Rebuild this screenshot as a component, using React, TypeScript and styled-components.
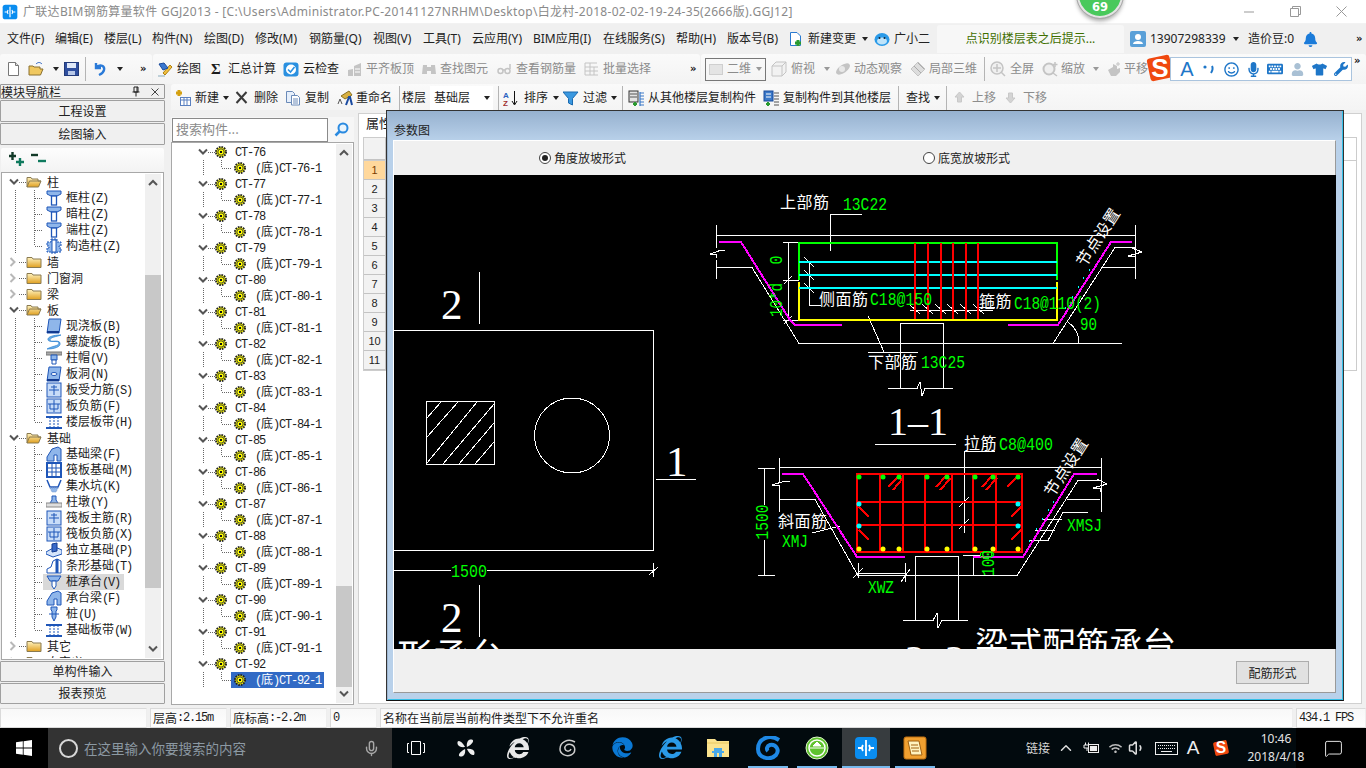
import React from 'react';
import styled, { createGlobalStyle } from 'styled-components';
import { FaBell, FaEdge, FaInternetExplorer, FaKeyboard, FaMicrophone, FaRegSmile, FaTshirt, FaUser, FaWifi, FaWrench } from 'react-icons/fa';
import { ChevronUp, MessageSquare, Mic, Volume1 } from 'lucide-react';

const CJK = '"Noto Sans CJK SC", sans-serif';
const UI = '"Noto Sans", "Noto Sans CJK SC", sans-serif';

const Global = createGlobalStyle`
  html, body { margin: 0; padding: 0; background: #f0f0f0; overflow: hidden; }
  * { box-sizing: border-box; }
`;

const Root = styled.div`
  position: relative; width: 1366px; height: 768px; overflow: hidden;
  display: flex; flex-direction: column; background: #f0f0f0;
  font: 12px/16px ${UI}; color: #1c1c1c;
`;

/* ---------- title bar ---------- */
const TitleBar = styled.div`
  flex: none; height: 23px; background: #fff; display: flex; align-items: center; padding: 0 2px;
`;
const TitleText = styled.span`
  flex: 1; min-width: 0; margin-left: 5px; color: #8a8a8a; font-size: 12px; letter-spacing: .31px; white-space: nowrap;
`;
const WinBtn = styled.span`
  flex: none; width: 46px; display: flex; justify-content: center; align-items: center; color: #999;
`;
const Badge = styled.div`
  position: absolute; left: 1077px; top: -28px; width: 46px; height: 46px; border-radius: 50%;
  background: #49c95c; border: 2px solid #e4e4e4; outline: 1px solid #aaa;
  box-shadow: 0 3px 4px rgba(0,0,0,.35); color: #fff; font-weight: 700; font-size: 11.5px;
  display: flex; align-items: flex-end; justify-content: center; padding-bottom: 1px;
  font-family: "DejaVu Sans", sans-serif;
`;

/* ---------- menu ---------- */
const MenuBar = styled.div`
  flex: none; height: 31px; display: flex; align-items: center; padding-left: 7px; background: #f0f0f0; border-top: 1px solid #f2f2f2;
`;
const MenuItem = styled.span<{ $w: number }>`
  flex: none; width: ${p => p.$w}px; display: flex; align-items: center; gap: 4px; white-space: nowrap; color: #222;
`;
const HintTab = styled.div`
  flex: none; width: 187px; height: 28px; margin-right: 6px; background: #f7f7f7; border-radius: 3px 3px 0 0;
  display: flex; align-items: center; justify-content: center; color: #3f6f00;
`;
const More = styled.span`
  flex: none; font: 700 10px/10px "DejaVu Sans", sans-serif; color: #111; letter-spacing: -1px;
`;
const Caret = styled.span<{ $ml?: number; $muted?: boolean }>`
  flex: none; width: 0; height: 0; margin-left: ${p => p.$ml ?? 4}px;
  border-left: 3.5px solid transparent; border-right: 3.5px solid transparent;
  border-top: 4px solid ${p => (p.$muted ? '#999' : '#222')};
`;

/* ---------- toolbars ---------- */
const ToolRow = styled.div`
  flex: none; height: 30px; display: flex; gap: 1px; background: #f0f0f0;
`;
const Group = styled.div<{ $w?: number; $pl?: number }>`
  flex: ${p => (p.$w ? 'none' : '1')}; width: ${p => (p.$w ? `${p.$w}px` : 'auto')};
  padding-left: ${p => p.$pl ?? 4}px; display: flex; align-items: center; border-radius: 3px 3px 0 0;
  background: linear-gradient(#fafafa, #f3f3f3);
  white-space: nowrap; overflow: hidden;
`;
const Tool = styled.span<{ $w?: number; $g?: number; $muted?: boolean }>`
  flex: none; width: ${p => (p.$w ? `${p.$w}px` : 'auto')}; display: flex; align-items: center; gap: ${p => p.$g ?? 4}px;
  color: ${p => (p.$muted ? '#8c8c8c' : '#1c1c1c')}; white-space: nowrap;
`;
const Sigma = styled.b`
  width: 9px; font-family: "Liberation Serif", serif; font-size: 15px;
`;
const Sep = styled.span<{ $w: number; $h?: number }>`
  flex: none; width: ${p => p.$w}px; height: ${p => p.$h ?? 24}px; display: flex;
  &::before { content: ''; display: block; width: 1px; height: 100%; background: #b4b4b4; }
`;
const ViewCombo = styled.span`
  flex: none; width: 61px; height: 23px; border: 1px solid #777; margin-right: 5px;
  display: flex; align-items: center; padding-left: 3px; gap: 4px; color: #8c8c8c;
`;
const Swatch = styled.span`
  flex: none; width: 14px; height: 11px; background: #e4e4e4; border: 1px solid #cfcfcf;
`;

/* ---------- workspace ---------- */
const Workspace = styled.div`
  flex: none; height: 624px; display: flex;
`;
const Nav = styled.div`
  flex: none; width: 165px; display: flex; flex-direction: column;
`;
const NavHead = styled.div`
  flex: none; height: 15px; border: 1px solid #999; border-radius: 1px; display: flex; align-items: center;
  font-size: 12px; line-height: 13px; font-family: ${CJK};
`;
const NavTitle = styled.span` flex: 1; `;
const PinIcon = styled.svg` flex: none; margin-right: 10px; `;
const CloseIcon = styled.svg` flex: none; margin-right: 5px; `;
const NavBtn = styled.div<{ $h?: number; $pt?: number }>`
  flex: none; height: ${p => p.$h ?? 22}px; margin-top: 1px; padding-top: ${p => p.$pt ?? 0}px; background: #f0f0f0; border: 1px solid #a0a0a0; border-radius: 1px;
  display: flex; align-items: center; justify-content: center; color: #222;
`;
const NavBody = styled.div`
  flex: none; height: 514px; margin-top: 1px; display: flex; flex-direction: column; background: #f0f0f0;
`;
const NavTools = styled.div`
  flex: none; height: 24px; display: flex; align-items: center; gap: 7px; padding: 0 0 3px 7px; background: linear-gradient(#fdfdfd, #f3f3f3);
  margin: 2px 1px 0; border-radius: 2px;
`;
const TreeFrame = styled.div`
  flex: 1; margin: 0 1px; min-height: 0; border: 1px solid #a8a8a8; background: #fff; display: flex; padding: 1px 2px 1px 1px;
`;
const TreeScroll = styled.div`
  flex: 1; min-width: 0; overflow: hidden;
`;
const Bar = styled.div`
  flex: none; width: 16px; background: #f0f0f0; display: flex; flex-direction: column; align-items: stretch;
`;
const BarBtn = styled.div`
  flex: none; height: 18px; display: flex; align-items: center; justify-content: center; color: #555;
`;
const BarTrack = styled.div` flex: 1; min-height: 0; `;
const BarThumb = styled.div<{ $top: number; $h: number }>`
  height: ${p => p.$h}px; margin-top: ${p => p.$top}px; background: #c8c8c8;
`;
const Row = styled.div`
  height: 16px; display: flex; align-items: center; white-space: nowrap; font-family: ${CJK}; font-size: 12px; color: #1c1c1c;
`;
const Twist = styled.span<{ $ml: number }>`
  flex: none; margin-left: ${p => p.$ml}px; width: 10px; height: 16px; display: flex; align-items: center;
`;
const Label = styled.span<{ $ml: number }>`
  margin-left: ${p => p.$ml}px; display: inline-block;
`;
const Lat = styled.span`
  font-family: "Liberation Mono", monospace; font-size: 12px; letter-spacing: -1.2px;
`;
const NavItem = styled.span<{ $on?: boolean }>`
  flex: none; width: 81px; height: 16px; padding-left: 3px; display: flex; align-items: center;
  background: ${p => (p.$on ? '#d9d9d9' : 'transparent')};
`;
const CompItem = styled.span<{ $on?: boolean }>`
  flex: none; width: 93px; height: 16px; padding-left: 3px; display: flex; align-items: center;
  background: ${p => (p.$on ? '#316ac5' : 'transparent')}; color: ${p => (p.$on ? '#fff' : 'inherit')};
`;
const Main = styled.div`
  flex: 1; min-width: 0; padding-left: 6px; display: flex; flex-direction: column;
`;
const Row2 = styled.div`
  flex: none; height: 26px; display: flex; align-items: center; padding: 2px 0 0 4px;
  background: linear-gradient(#fafafa, #f4f4f4); border-radius: 3px 0 0 0; white-space: nowrap;
`;
const FloorCombo = styled.span`
  flex: none; width: 63px; height: 24px; background: #fff; display: flex; align-items: center; padding-left: 4px; justify-content: space-between;
  padding-right: 3px; margin-right: 5px;
`;
const Body = styled.div`
  flex: 1; min-height: 0; display: flex;
`;
const CompCol = styled.div`
  flex: none; width: 183px; padding-top: 7px; padding-bottom: 3px; display: flex; flex-direction: column;
`;
const SearchRow = styled.div`
  flex: none; height: 25px; display: flex; align-items: center; padding-left: 1px; gap: 6px; background: #f6f6f6;
`;
const Search = styled.div`
  flex: none; width: 156px; height: 24px; background: #fff; border: 1px solid #8a8a8a; color: #8a8a8a; padding-left: 3px;
  font-size: 13px; line-height: 19px; font-family: ${CJK};
`;
const SearchIcon = styled.svg` flex: none; `;
const CompFrame = styled.div`
  flex: 1; min-height: 0; border: 1px solid #a8a8a8; background: #fff; display: flex; padding: 1px 1px 1px 0;
`;
const Props = styled.div`
  flex: 1; min-width: 0; margin: 3px 4px 4px 4px; background: #fff; border: 1px solid #d0d0d0; display: flex; flex-direction: column;
`;
const PropTab = styled.div`
  flex: none; height: 23px; padding-left: 7px; font-size: 13px; line-height: 17px; font-family: ${CJK};
`;
const PropTable = styled.div` margin: 0 4px; border: 1px solid #ccc; flex: none; `;
const PropHead = styled.div` height: 23px; border-bottom: 1px solid #ccc; display: flex; `;
const PropRow = styled.div` height: 19px; display: flex; `;
const RowNo = styled.div<{ $on?: boolean }>`
  flex: none; width: 22px; display: flex; align-items: center; justify-content: center;
  font-family: "Liberation Sans", sans-serif; font-size: 11px;
  background: ${p => (p.$on ? '#ffd89c' : '#f2f2f2')}; color: ${p => (p.$on ? '#7a3c00' : '#222')};
  border-right: 1px solid #c4c4c4; border-bottom: 1px solid #c4c4c4;
`;

/* ---------- status ---------- */
const Status = styled.div`
  flex: none; height: 20px; display: flex; gap: 3px; background: #f0f0f0;
`;
const Cell = styled.div<{ $w: number }>`
  flex: none; width: ${p => p.$w}px; background: linear-gradient(#f8f8f8, #fefefe); border: 1px solid #dadada; border-right-color: #eee;
  padding-left: 2px; display: flex; align-items: center; font-family: ${CJK}; white-space: nowrap; line-height: 16px;
`;

/* ---------- taskbar ---------- */
const Task = styled.div`
  flex: none; height: 40px; display: flex; align-items: stretch; color: #fff;
  background: linear-gradient(90deg, #020a0e 0 1296px, #000 1296px);
`;
const Start = styled.div`
  flex: none; width: 48px; background: #000; display: flex; align-items: center; justify-content: center;
`;
const Cortana = styled.div`
  flex: none; width: 344px; background: #333; display: flex; align-items: center; padding-left: 11px; color: #8c99a3; font-size: 13.5px; font-family: ${CJK};
`;
const Ring = styled.span`
  flex: none; width: 19px; height: 19px; border-radius: 50%; border: 2.5px solid #d8d8d8; margin-right: 6px;
`;
const Hint = styled.span` flex: 1; white-space: nowrap; `;
const MicWrap = styled.span` flex: none; margin-right: 12px; display: flex; `;
const Slot = styled.div<{ $w: number; $ml?: number; $on?: boolean; $active?: boolean }>`
  flex: none; width: ${p => p.$w}px; margin-left: ${p => p.$ml ?? 0}px; display: flex; align-items: center; justify-content: center;
  border-bottom: 2px solid ${p => (p.$on ? '#76b9ed' : 'transparent')}; padding-top: 1px;
  background: ${p => (p.$active ? '#373c3f' : 'transparent')};
`;
const TrayItem = styled.div<{ $w: number; $ml?: number; $pr?: number }>`
  flex: none; width: ${p => p.$w}px; margin-left: ${p => p.$ml ?? 0}px; padding-right: ${p => p.$pr ?? 0}px; display: flex; align-items: center; justify-content: center;
  color: #d8d8d8; font-family: ${CJK}; font-size: 12px;
`;
const TrayA = styled.span` font: 400 19px "Liberation Sans", sans-serif; color: #eee; `;
const Clock = styled.div`
  flex: none; width: 60px; display: flex; flex-direction: column; align-items: center; justify-content: center; line-height: 18px;
  font-size: 12px; color: #e4e4e4; white-space: nowrap; font-family: "Noto Sans", sans-serif;
`;

/* ---------- dialog ---------- */
const Dialog = styled.div`
  position: absolute; left: 386px; top: 110px; width: 958px; height: 591px;
  border: 1px solid #333; border-bottom-color: #111; box-shadow: inset -1px 0 0 #35c0e8, inset 1px 0 0 #9db6d1, inset 0 -1px 0 #35c0e8;
  background: linear-gradient(#96b1cf 0, #b9d1ea 30px);
  padding: 29px 7px 7px 6px; display: flex; flex-direction: column;
`;
const DlgTitle = styled.div`
  position: absolute; left: 7px; top: 11px; font-size: 12px; line-height: 16px; color: #222; font-family: ${CJK};
`;
const DlgBody = styled.div`
  flex: 1; min-height: 0; background: #f0f0f0; border-top: 1px solid #fff; border-left: 1px solid #fff; border-right: 1px solid #999; border-bottom: 1px solid #999;
  display: flex; flex-direction: column;
`;
const RadioBand = styled.div`
  flex: none; height: 34px; display: flex; align-items: center; padding-left: 145px;
`;
const RadioItem = styled.label<{ $w: number }>`
  flex: none; width: ${p => p.$w}px; display: flex; align-items: center; gap: 3px; font-family: ${CJK}; color: #222;
`;
const Radio = styled.span<{ $on?: boolean }>`
  flex: none; width: 12px; height: 12px; border-radius: 50%; border: 1px solid #444; background: #fff;
  display: flex; align-items: center; justify-content: center;
  &::after { content: ''; width: 6px; height: 6px; border-radius: 50%; background: ${p => (p.$on ? '#222' : 'transparent')}; }
`;
const Canvas = styled.svg`
  flex: none; display: block; width: 942px; height: 474px; background: #000;
`;
const DlgFoot = styled.div`
  flex: 1; min-height: 0; display: flex; justify-content: flex-end; padding: 12px 26px 0 0;
`;
const DlgBtn = styled.div`
  width: 73px; height: 23px; background: #e1e1e1; border: 1px solid #adadad; display: flex; align-items: center; justify-content: center;
  font-family: ${CJK}; color: #222;
`;
const White = styled.text<{ $s?: number }>`
  fill: #fff; font-family: ${CJK}; font-size: ${p => p.$s ?? 16}px; letter-spacing: ${p => (p.$s ? 0 : .5)}px;
`;
const GreenText = styled.text<{ $s?: number }>`
  fill: #0f0; font-family: "Liberation Mono", monospace; font-size: ${p => p.$s ?? 18}px;
`;
const Big = styled.text<{ $s: number }>`
  fill: #fff; font-family: "Liberation Serif", serif; font-size: ${p => p.$s}px;
`;

/* ---------- Sogou IME bar ---------- */
const Ime = styled.div`
  position: absolute; left: 1170px; top: 57px; width: 182px; height: 24px; background: #fff; border: 1px solid #aac4de;
  display: flex; align-items: center; padding-left: 5px; color: #1e76c8;
`;
const ImeSlot = styled.span`
  flex: none; width: 22px; display: flex; align-items: center; justify-content: center; font: 400 20px/20px "Liberation Sans", sans-serif;
`;
const ImeLogo = styled.div`
  position: absolute; left: 1145px; top: 53px;
`;
const ImeMore = styled(More)` position: absolute; left: 1354px; top: 56px; `;

/* ---------- helpers ---------- */
const Mx = ({ t }: { t: string }) => (
  <>{t.split(/([\x00-\x7f]+)/).filter(Boolean).map((s, i) =>
    /^[\x00-\x7f]/.test(s) ? <Lat key={i}>{s}</Lat> : <span key={i}>{s}</span>)}</>
);
const G = ({ x, y, w, r, children }: { x: number; y: number; w: number; r?: boolean; children: React.ReactNode }) => (
  <GreenText x={x} y={y} textLength={w} lengthAdjust="spacingAndGlyphs" textAnchor={r ? 'middle' : undefined} transform={r ? `rotate(-90 ${x} ${y})` : undefined}>{children}</GreenText>
);
const I = ({ w = 16, h = 16, children }: { w?: number; h?: number; children: React.ReactNode }) => (
  <svg width={w} height={h} viewBox={`0 0 ${w} ${h}`} style={{ flex: 'none', display: 'block' }}>{children}</svg>
);
const Down = () => <svg width="10" height="8" viewBox="0 0 10 8" style={{ display: 'block' }}><path d="M1 1.5L5 5.5L9 1.5" fill="none" stroke="#555" strokeWidth="2" /></svg>;
const Right = () => <svg width="8" height="10" viewBox="0 0 8 10" style={{ display: 'block' }}><path d="M1.5 1L5.5 5L1.5 9" fill="none" stroke="#b8b8b8" strokeWidth="2" /></svg>;
const Up = () => <svg width="10" height="8" viewBox="0 0 10 8" style={{ display: 'block' }}><path d="M1 6L5 2L9 6" fill="none" stroke="#555" strokeWidth="2" /></svg>;

const AppIcon = ({ s = 16 }: { s?: number }) => (
  <svg width={s} height={s} viewBox="0 0 24 24" style={{ flex: 'none', display: 'block' }}>
    <rect x="1" y="1" width="22" height="22" rx="4" fill="#0a8df0" />
    <path d="M12 4V20M4 12H9M15 12H20M9 9Q7 12 9 15M15 9Q17 12 15 15" fill="none" stroke="#fff" strokeWidth="1.8" />
  </svg>
);
const Folder = ({ open }: { open?: boolean }) => (
  <I>
    <defs><linearGradient id="fg" x1="0" y1="0" x2="0" y2="1"><stop offset="0" stopColor="#fff3c0" /><stop offset="1" stopColor="#e0a020" /></linearGradient></defs>
    {open
      ? <path d="M1 13V3.5H5L6 5H12V7H15L12.5 13Z M1 13L3.5 7H15" fill="url(#fg)" stroke="#8a7a50" />
      : <path d="M1 13.5V3.5H6L7 5H15V13.5Z" fill="url(#fg)" stroke="#8a7a50" />}
  </I>
);
const Blue = '#1f56b8';
const Lite = '#8fb6ea';
const Comp = ({ k }: { k: string }) => {
  switch (k) {
    case 'tcol': return <I><path d="M1 1H15V4L11 6H5L1 4Z" fill={Lite} stroke={Blue} /><rect x="5.5" y="6" width="5" height="9" fill="#fff" stroke={Blue} strokeWidth="1.3" /></I>;
    case 'gcol': return <I><path d="M5 1H11V4H15V8H13V10H15V14H11V15H5V14H1V10H3V8H1V4H5Z" fill={Lite} stroke={Blue} strokeDasharray="2 1" /><rect x="6" y="2" width="4" height="12" fill="#fff" stroke={Blue} /></I>;
    case 'slab': return <I><path d="M3 1H15L13 15H1Z" fill={Lite} stroke={Blue} /><path d="M1 14H13" stroke="#123a90" strokeWidth="2" /></I>;
    case 'spiral': return <I><path d="M15 1C7 1 1 3 2 6S13 6 13 9S6 12 1 15C8 15 15 13 14 9S4 9 4 6S10 3 15 1Z" fill="#6db0ea" stroke="#2a80d0" strokeWidth=".7" /></I>;
    case 'cap': return <I><rect x="0" y="2" width="16" height="3" fill="#aaa" stroke="#777" /><path d="M5 5H11V10H5Z" fill={Lite} stroke={Blue} /><path d="M6 10H10V14H6Z" fill="#fff" stroke={Blue} /></I>;
    case 'hole': return <I><path d="M3 1H15L13 15H1Z" fill={Lite} stroke={Blue} /><ellipse cx="8" cy="8" rx="3" ry="1.5" fill="#fff" stroke={Blue} /><path d="M1 14H13" stroke="#123a90" strokeWidth="2" /></I>;
    case 'rb': return <I><rect x="1" y="1" width="14" height="14" fill="#c8dcf8" stroke={Blue} /><path d="M8 3V13M3 8H13M5 5H11" stroke={Blue} fill="none" /></I>;
    case 'neg': return <I><rect x="1" y="1" width="14" height="14" fill="#c8dcf8" stroke={Blue} /><path d="M2 6H14M8 2V14M4 6V11H12V6" stroke={Blue} fill="none" /></I>;
    case 'band': return <I><path d="M0 3H16M0 14H16" stroke={Blue} strokeWidth="2" /><path d="M4 3V14M8 3V14M12 3V14" stroke={Blue} strokeDasharray="2 1" /></I>;
    case 'beam': return <I><path d="M1 15V11L6 3L12 1L15 3V15H11V9L8 9V15Z" fill={Lite} stroke={Blue} /></I>;
    case 'raft': return <I><rect x="1" y="1" width="14" height="14" fill="#fff" stroke={Blue} strokeWidth="2" /><path d="M6 1V15M10 1V15M1 6H15M1 10H15" stroke={Blue} /></I>;
    case 'sump': return <I><path d="M1 2L4 9H12L15 2" fill="none" stroke={Blue} strokeWidth="1.5" /><path d="M4 10H12L10 14H6Z" fill={Lite} stroke="#7a9cd0" strokeDasharray="1 1" /></I>;
    case 'pier': return <I><path d="M6 2H10V6L12 9H4L6 6Z" fill={Lite} stroke={Blue} /><rect x="0" y="9" width="16" height="4" fill="#ddd" stroke="#888" /></I>;
    case 'foot': return <I><path d="M0 10L9 5L16 8V12L7 15L0 12Z" fill="#d4e4fa" stroke={Blue} /><path d="M6 2L11 1V9L6 10Z" fill="#3a6ac8" stroke="#123a90" /></I>;
    case 'strip': return <I><path d="M1 15V11L5 9L7 3L11 1L15 3V15Z" fill="#fff" stroke={Blue} /><path d="M11 1V15" stroke={Blue} strokeWidth="3" /></I>;
    case 'ctp': return <I><path d="M1 2H15L12 7H4Z" fill={Lite} stroke={Blue} /><path d="M6 7H10V12L8 15L6 12Z" fill="#fff" stroke={Blue} /></I>;
    case 'pile': return <I><path d="M5 1H11V4L10 5V11L8 15L6 11V5L5 4Z" fill={Lite} stroke={Blue} /><path d="M3 8H13" stroke={Blue} /></I>;
    default: return null;
  }
};
const Gear = () => (
  <svg width="12" height="12" viewBox="0 0 12 12" style={{ flex: 'none', display: 'block' }}>
    <circle cx="6" cy="6" r="5" fill="#ff0" stroke="#222" strokeWidth="2" strokeDasharray="1.6 1" />
    <circle cx="6" cy="6" r="3.2" fill="#ff0" stroke="#443" />
    <rect x="5" y="5" width="2" height="2" fill="#111" />
  </svg>
);
const NavLines = ({ last }: { last?: boolean }) => (
  <svg width="40" height="16" viewBox="0 0 40 16" style={{ flex: 'none', display: 'block' }}>
    <path d={`M12.5 0V16M31.5 0V${last ? 8 : 16}M32 8.5H40`} stroke="#666" strokeDasharray="1 1" fill="none" shapeRendering="crispEdges" />
  </svg>
);
const CompLines = () => (
  <svg width="59" height="16" viewBox="0 0 59 16" style={{ flex: 'none', display: 'block' }}>
    <path d="M31.5 0V16M49.5 0V8M50 8.5H59" stroke="#666" strokeDasharray="1 1" fill="none" shapeRendering="crispEdges" />
  </svg>
);
const Dots = ({ w }: { w: number }) => (
  <svg width={w} height="16" viewBox={`0 0 ${w} 16`} style={{ flex: 'none', display: 'block' }}>
    <path d={`M0 8.5H${w}`} stroke="#666" strokeDasharray="1 1" shapeRendering="crispEdges" />
  </svg>
);

/* toolbar icons */
const Gry = '#c4c4c4';
const Tb: Record<string, React.ReactNode> = {
  new: <I w={13}><path d="M1.5 1.5H8.5L11.5 4.5V14.5H1.5Z" fill="#fff" stroke="#777" /><path d="M8.5 1.5V4.5H11.5" fill="#ddd" stroke="#777" /></I>,
  open: <I><path d="M1 14V5H5L6 6H12V8H15L12.5 14Z" fill="#f0c860" stroke="#8a7030" /><path d="M8 3C10 1 12 1 14 3" fill="none" stroke="#2a62c0" /></I>,
  save: <I w={15}><rect x=".5" y="1.5" width="14" height="13" fill="#2f4f9f" stroke="#223a7a" /><rect x="3" y="2" width="9" height="5" fill="#dfe8f8" /><rect x="4" y="10" width="7" height="4" fill="#b8c8e8" /></I>,
  undo: <I w={13}><path d="M3 2V7H8M3 7C6 3 12 4 11 9C10.5 12 8 13 6 14" fill="none" stroke="#2a7ad8" strokeWidth="2.4" /></I>,
  draw: <I><path d="M6 12L13 4L15 6L8 14Z" fill="#f0c040" stroke="#b08010" /><path d="M2 3L7 2L11 7L6 9Z" fill="#3a78d0" stroke="#1a4a9a" /><path d="M1 15H8" stroke="#8ab" /></I>,
  cloud: <I><rect x=".5" y="1.5" width="15" height="14" rx="3" fill="#2a90e0" /><circle cx="8" cy="8.5" r="5" fill="#fff" /><path d="M5 8.5L7.5 11L11.5 6" fill="none" stroke="#2a90e0" strokeWidth="1.6" /></I>,
  flat: <I><path d="M1 15V9L6 8V15ZM7 15V5L14 2V15Z" fill={Gry} /><path d="M8 8H13M8 11H13" stroke="#fff" /></I>,
  bino: <I><path d="M2 4H6V13H1ZM10 4H14L15 13H10ZM6 6H10V10H6Z" fill={Gry} /></I>,
  glasses: <I w={14}><circle cx="3.5" cy="10" r="2.5" fill="none" stroke={Gry} strokeWidth="1.5" /><circle cx="10.5" cy="10" r="2.5" fill="none" stroke={Gry} strokeWidth="1.5" /><path d="M6 9H8M13 8V3" stroke={Gry} strokeWidth="1.5" /></I>,
  batch: <I w={15}><path d="M1 2H13M1 6H14M1 10H14M1 14H14M1 2V14M6 2V14M10 6V14" stroke={Gry} fill="none" /></I>,
  cube: <I><path d="M1 5L5 1H15V11L11 15H1Z M1 5H11V15M11 5L15 1" fill="#f2f2f2" stroke={Gry} /></I>,
  orbit: <I><ellipse cx="8" cy="8" rx="8" ry="4" transform="rotate(-35 8 8)" fill={Gry} /><circle cx="7" cy="8" r="3" fill="#e8e8e8" /></I>,
  part: <I><path d="M1 8L8 1L15 8L8 15Z" fill="#ddd" stroke={Gry} /><path d="M4 5L11 12M8 2L14 8" stroke="#aaa" /></I>,
  full: <I><circle cx="7" cy="7" r="6" fill="#f0f0f0" stroke={Gry} strokeWidth="1.5" /><path d="M7 3V11M3 7H11M11 11L15 15" stroke={Gry} strokeWidth="1.5" /></I>,
  zoom: <I><circle cx="7" cy="8" r="5.5" fill="#efefef" stroke={Gry} strokeWidth="2" /><path d="M11 12L15 15M13 1V6M10.5 3.5H15.5" stroke={Gry} strokeWidth="1.5" /></I>,
  pan: <I><path d="M2 9L7 6V3L11 5V8L14 7V11L10 15H5Z" fill={Gry} /><path d="M12 1V5M10 3H14" stroke={Gry} /></I>,
  add: <I><path d="M4 0V6M1 3H7" stroke="#d4a010" strokeWidth="3" /><rect x="5.5" y="7.5" width="10" height="8" fill="#fff" stroke="#5a80c0" /><path d="M6 10H15M9 8V15M12 8V15" stroke="#5a80c0" /></I>,
  x: <I w={13}><path d="M1.5 2L11.5 13M11.5 2L1.5 13" stroke="#3a3a3a" strokeWidth="2" /></I>,
  copy: <I><path d="M1.5 1.5H7.5L9.5 3.5V12.5H1.5Z" fill="#e6effb" stroke="#6a8ab8" /><path d="M6.5 5.5H12.5L14.5 7.5V15H6.5Z" fill="#fff" stroke="#6a8ab8" /><path d="M8 9H13M8 11H13M8 13H13" stroke="#6a8ab8" /></I>,
  ren: <I><path d="M4 6L12 1L15 5L8 9Z" fill="#d8b040" stroke="#8a7020" /><path d="M9 15L12 7H13L15 15" fill="none" stroke="#1a4aa0" strokeWidth="2" /><path d="M1 14L3 9L5 14" fill="none" stroke="#555" /></I>,
  sort: <I><text x="0" y="8" fontSize="8" fontWeight="700" fill="#2a62c0" fontFamily="Liberation Sans">A</text><text x="0" y="16" fontSize="8" fontWeight="700" fill="#a03030" fontFamily="Liberation Sans">Z</text><path d="M11.5 1V14M9 11L11.5 15L14 11" fill="none" stroke="#111" /></I>,
  funnel: <I><path d="M0 2H15L9.5 8.5V15L5.5 13V8.5Z" fill="#3a98e0" stroke="#1a6ab0" /></I>,
  from: <I><rect x="1" y="1" width="9" height="11" fill="#e4e4e4" stroke="#333" /><path d="M2 4H9M2 7H9" stroke="#555" /><path d="M5 14H9M7 12V16" stroke="#2a9a30" strokeWidth="2" /><path d="M12 3H16M12 6H16M12 9H16M12 12H16M12 15H16M12 2V16" stroke="#3a78c8" strokeWidth="1.2" /></I>,
  to: <I><rect x="1" y="1" width="9" height="10" fill="#3a78c8" stroke="#1a4a9a" /><path d="M3 4H8M3 7H8" stroke="#fff" /><path d="M3 14H7M5 12V16" stroke="#2a9a30" strokeWidth="2" /><path d="M11 3H16M11 6H16M11 9H16M11 12H16M11 15H16" stroke="#555" strokeWidth="1.2" /></I>,
  up: <I w={11}><path d="M5.5 2L10 7H7.5V12H3.5V7H1Z" fill="#d4d4d4" stroke="#c8c8c8" /></I>,
  down: <I w={11}><path d="M5.5 13L10 8H7.5V3H3.5V8H1Z" fill="#d4d4d4" stroke="#c8c8c8" /></I>,
  change: <I><path d="M2.5 1.5H9L12.5 5V14.5H2.5Z" fill="#fff" stroke="#2a7ad0" /><path d="M10 9V15M7 12H13" stroke="#2a9a30" strokeWidth="3" /></I>,
  robot: <I><ellipse cx="8" cy="8.5" rx="7.5" ry="6.5" fill="#2a9ae8" /><ellipse cx="8" cy="10" rx="5" ry="3.6" fill="#bfe4fa" /><circle cx="5.5" cy="7" r="1" fill="#123" /><circle cx="10.5" cy="7" r="1" fill="#123" /></I>,
  user: <I><rect width="16" height="16" rx="2" fill="#5aa0d8" /><circle cx="8" cy="6" r="3" fill="#fff" /><path d="M3 13C3 9 13 9 13 13Z" fill="#fff" /></I>,
};

const Sogou = ({ s }: { s: number }) => (
  <svg width={s} height={s} viewBox="0 0 30 30" style={{ display: 'block', flex: 'none' }}>
    <rect x="3.5" y="3.5" width="23" height="23" rx="3" fill="#f0480f" transform="rotate(-12 15 15)" />
    <text x="15" y="24" textAnchor="middle" fontSize="26" fontWeight="700" fontFamily="Liberation Sans" fill="#fff">S</text>
  </svg>
);

/* ---------- data ---------- */
const menu: [string, number][] = [['文件(F)', 48], ['编辑(E)', 49], ['楼层(L)', 48], ['构件(N)', 52], ['绘图(D)', 51], ['修改(M)', 54], ['钢筋量(Q)', 64], ['视图(V)', 50], ['工具(T)', 49], ['云应用(Y)', 61], ['BIM应用(I)', 70], ['在线服务(S)', 73], ['帮助(H)', 51], ['版本号(B)', 61]];
type Node = { label: string; open?: boolean; kids?: [string, string][] };
const nav: Node[] = [
  { label: '柱', open: true, kids: [['框柱(Z)', 'tcol'], ['暗柱(Z)', 'tcol'], ['端柱(Z)', 'tcol'], ['构造柱(Z)', 'gcol']] },
  { label: '墙' }, { label: '门窗洞' }, { label: '梁' },
  { label: '板', open: true, kids: [['现浇板(B)', 'slab'], ['螺旋板(B)', 'spiral'], ['柱帽(V)', 'cap'], ['板洞(N)', 'hole'], ['板受力筋(S)', 'rb'], ['板负筋(F)', 'neg'], ['楼层板带(H)', 'band']] },
  { label: '基础', open: true, kids: [['基础梁(F)', 'beam'], ['筏板基础(M)', 'raft'], ['集水坑(K)', 'sump'], ['柱墩(Y)', 'pier'], ['筏板主筋(R)', 'rb'], ['筏板负筋(X)', 'neg'], ['独立基础(P)', 'foot'], ['条形基础(T)', 'strip'], ['桩承台(V)', 'ctp'], ['承台梁(F)', 'beam'], ['桩(U)', 'pile'], ['基础板带(W)', 'band']] },
  { label: '其它' }, { label: '自定义' },
];
const cts = Array.from({ length: 17 }, (_, i) => 76 + i);

/* ---------- CAD drawing (coordinates are those of the picture) ---------- */
const redX = [915, 928, 941, 953, 966, 978];
const dotX = [859, 883, 899, 927, 947, 975, 993, 1018];
const Dot = ({ x, y, c }: { x: number; y: number; c: string }) => <circle cx={x} cy={y} r="2.5" fill={c} shapeRendering="auto" />;
const Cad = () => (
  <Canvas viewBox="394 175 942 474" shapeRendering="crispEdges">
    {/* plan */}
    <Big $s={43} x="441" y="319">2</Big>
    <Big $s={43} x="441" y="632">2</Big>
    <Big $s={43} x="666" y="476">1</Big>
    <path fill="none" stroke="#fff" d="M479.5 272V324M479.5 585V637M390 330.5H653.5V550.5H390M426.5 401.5H494.5V464.5H426.5ZM656 479.5H696M390 570.5H451M487 570.5H653M653.5 563V577M649 575L658 567" />
    <path fill="none" stroke="#fff" d="M427 418L441 402M427 437L458 402M427 463L477 402M443 464L494 404M459 464L494 423M475 464L494 442" />
    <circle cx="572" cy="435.5" r="37.5" fill="none" stroke="#fff" />
    <G x={451} y={577} w={36}>1500</G>
    <White $s={36} x="397" y="670">形承台</White>

    {/* upper section */}
    <path fill="none" stroke="#fff" d="M716.5 225V248M716.5 260V279M716 235.5H1135M716 267.5H752L799 343.5H1122M1053 343.5L1115 247.5H1135M1102 267.5H1135M1135.5 225V279M710 254L720 250.5H725M710 254H716V258M1128 256L1142 252L1132 248M1128 256H1135V260" />
    <path fill="none" stroke="#fff" d="M788.5 242V320M783 242.5H799M783 280.5H799M783 320.5H799M784 284L792 276M784 324L792 316M830.5 214.5H862M830.5 214V251" />
    <path fill="none" stroke="#fff" d="M804 257L814 267M804 270L814 280M804 283L814 293M809.5 262V305.5H821M910 310.5H993M909 304L920 314M922 304L933 314M935 304L946 314M947 304L958 314M960 304L971 314M973 304L984 314M979 307H995" />
    <path fill="none" stroke="#fff" d="M868 316L884 352M868 352.5H918M900.5 388V323.5H943.5V388M888 388.5H917L920 382L922 396L925 388.5H953M1068 322Q1079 330 1079 343" />
    <path fill="none" stroke="#f0f" strokeWidth="2" d="M719 242H741L790 320L795 325H842M1008 325H1058L1111 242H1132" />
    <path fill="none" stroke="#0f0" strokeWidth="2" d="M799 280V243H1057V280" />
    <path fill="none" stroke="#ff0" strokeWidth="2" d="M799 282V320H1057V282" />
    <path fill="none" stroke="#0ff" strokeWidth="2" d="M799 262H1057M799 275H1057M799 288H1057" />
    <path fill="none" stroke="#f00" strokeWidth="2" d={redX.map(x => `M${x} 243V319`).join('')} />
    <path fill="none" stroke="#0ff" strokeWidth="2" d="M1089 270h1M1083 278h1M1078 287h1M1072 297h1M1065 308h1" />
    <White x="780" y="208">上部筋</White>
    <G x={843} y={210} w={44}>13C22</G>
    <White x="819" y="305">侧面筋</White>
    <G x={870} y={305} w={62}>C18@150</G>
    <White x="979" y="307">箍筋</White>
    <G x={1014} y={309} w={87}>C18@110(2)</G>
    <White x="868" y="368">下部筋</White>
    <G x={921} y={368} w={44}>13C25</G>
    <G x={1080} y={330} w={17}>90</G>
    <G x={782} y={260} w={9} r>0</G>
    <G x={782} y={300} w={34} r>10*d</G>
    <White x="1098" y="243" textAnchor="middle" transform="rotate(-57 1098 237)">节点设置</White>

    {/* lower section */}
    <path fill="none" stroke="#fff" d="M779.5 458V483M779 467.5H1101M1101.5 458V512M779 499.5H815L858 575.5H1017L1078 480.5H1100M1067 499.5H1100M779.5 488V512M772 485L785 481H790M772 485H779V490M1093 488L1107 484L1097 479M1093 488H1100V492" />
    <path fill="none" stroke="#fff" d="M964 451.5H995M964.5 451V533M959 507L969 497M959 529L969 519M812 533L840 526" />
    <path fill="none" stroke="#fff" d="M764.5 468V505M764.5 540V575M758 468.5H775M758 575.5H775M858 573.5H905M858.5 563V578M905.5 563V582M853 578L863 568M901 582L910 569" />
    <path fill="none" stroke="#fff" d="M915.5 620V556.5H958.5V620M903 620.5H933L937 613L938 628L942 620.5H968M963 555.5H980M973.5 557V575M1063 512.5H1088M1063 512L1048 540.5H1030M1035 530.5H1055M1042 519.5H1062" />
    <path fill="none" stroke="#f0f" strokeWidth="2" d="M782 474H803L857 557H905M973 557H1023L1074 474H1097" />
    <path fill="none" stroke="#f00" strokeWidth="2" d="M857 474H1022V552H857ZM880 474V552M903 474V552M925 474V552M952 474V552M973 474V552M996 474V552M857 502H1022M857 525H1022" />
    <path fill="none" stroke="#f00" strokeWidth="2" d="M888 487L900 475M893 490L903 478M936 487L947 475M940 490L951 478M982 487L993 475M986 490L997 478M1007 487L1019 475M859 507L869 517M859 530L869 540M1011 517L1021 507M1011 540L1021 530" />
    <path fill="none" stroke="#0ff" strokeWidth="2" d="M1053 502h1M1048 510h1M1042 519h1M1036 529h1M1029 541h1" />
    {dotX.map(x => <React.Fragment key={x}><Dot x={x} y={477} c="#0f0" /><Dot x={x} y={549} c="#ff0" /></React.Fragment>)}
    {[[859, 504], [859, 526], [1018, 504], [1018, 526]].map(([x, y]) => <Dot key={`${x}-${y}`} x={x} y={y} c="#0ff" />)}
    <Big $s={40} x="888" y="435">1–1</Big>
    <path stroke="#fff" d="M875 444.5H956" />
    <White x="964" y="449">拉筋</White>
    <G x={999} y={450} w={54}>C8@400</G>
    <White x="778" y="527">斜面筋</White>
    <G x={782} y={547} w={26}>XMJ</G>
    <G x={768} y={522} w={35} r>1500</G>
    <G x={868} y={593} w={26}>XWZ</G>
    <G x={1067} y={531} w={35}>XMSJ</G>
    <G x={994} y={563} w={26} r>100</G>
    <ellipse cx="986" cy="555" rx="6" ry="3.5" fill="none" stroke="#0f0" />
    <White x="1066" y="473" textAnchor="middle" transform="rotate(-57 1066 467)">节点设置</White>
    <Big $s={40} x="905" y="673">2–2</Big>
    <White $s={33.5} x="975" y="656">梁式配筋承台</White>
  </Canvas>
);

export default function App() {
  return (
    <Root>
      <Global />
      <TitleBar>
        <AppIcon />
        <TitleText>广联达BIM钢筋算量软件 GGJ2013 - [C:\Users\Administrator.PC-20141127NRHM\Desktop\白龙村-2018-02-02-19-24-35(2666版).GGJ12]</TitleText>
        <WinBtn><svg width="10" height="2"><path d="M0 1H10" stroke="#999" /></svg></WinBtn>
        <WinBtn><svg width="11" height="11"><path d="M.5 2.5H8.5V10.5H.5ZM2.5 2.5V.5H10.5V8.5H8.5" fill="none" stroke="#999" /></svg></WinBtn>
        <WinBtn><svg width="11" height="11"><path d="M.5 .5L10.5 10.5M10.5 .5L.5 10.5" stroke="#999" /></svg></WinBtn>
      </TitleBar>
      <Badge>69</Badge>

      <MenuBar>
        {menu.map(([t, w]) => <MenuItem key={t} $w={w}>{t}</MenuItem>)}
        <MenuItem $w={86}>{Tb.change}<span>新建变更</span><Caret $ml={2} /></MenuItem>
        <MenuItem $w={63}>{Tb.robot}<span>广小二</span></MenuItem>
        <HintTab>点识别楼层表之后提示...</HintTab>
        <MenuItem $w={103}>{Tb.user}<span>13907298339</span><Caret $ml={3} /></MenuItem>
        <MenuItem $w={15} />
        <MenuItem $w={55}>造价豆:0</MenuItem>
        <FaBell size={15} color="#1b7bd9" style={{ flex: 'none' }} />
        <MenuItem $w={38} />
        <More>»</More>
      </MenuBar>

      <ToolRow>
        <Group $w={152} $pl={7}>
          <Tool $w={21}>{Tb.new}</Tool>
          <Tool $w={36} $g={9}>{Tb.open}<Caret $ml={0} /></Tool>
          <Tool $w={21}>{Tb.save}</Tool>
          <Sep $w={8} />
          <Tool $w={47} $g={11}>{Tb.undo}<Caret $ml={0} /></Tool>
          <More>»</More>
        </Group>
        <Group $w={547}>
          <Tool $w={54}>{Tb.draw}绘图</Tool>
          <Tool $w={72} $g={8}><Sigma>Σ</Sigma>汇总计算</Tool>
          <Tool $w={64}>{Tb.cloud}云检查</Tool>
          <Tool $w={74} $g={3} $muted>{Tb.flat}平齐板顶</Tool>
          <Tool $w={76} $g={3} $muted>{Tb.bino}查找图元</Tool>
          <Tool $w={87} $g={5} $muted>{Tb.glasses}查看钢筋量</Tool>
          <Tool $w={106} $g={4} $muted>{Tb.batch}批量选择</Tool>
          <More>»</More>
        </Group>
        <Group>
          <ViewCombo><Swatch />二维<Caret $ml={1} $muted /></ViewCombo>
          <Tool $w={64} $muted>{Tb.cube}俯视<Caret $ml={5} $muted /></Tool>
          <Tool $w={75} $g={3} $muted>{Tb.orbit}动态观察</Tool>
          <Tool $w={74} $g={3} $muted>{Tb.part}局部三维</Tool>
          <Sep $w={6} />
          <Tool $w={52} $muted>{Tb.full}全屏</Tool>
          <Tool $w={64} $g={3} $muted>{Tb.zoom}缩放<Caret $ml={5} $muted /></Tool>
          <Tool $g={2} $muted>{Tb.pan}平移</Tool>
        </Group>
      </ToolRow>

      <Workspace>
        <Nav>
          <NavHead>
            <NavTitle>模块导航栏</NavTitle>
            <PinIcon width="10" height="11" viewBox="0 0 10 11"><path d="M3 1H7V6H3ZM1.5 6H8.5M5 6V10.5M6 1V6" fill="none" stroke="#222" /></PinIcon>
            <CloseIcon width="8" height="8" viewBox="0 0 8 8"><path d="M.5 .5L7.5 7.5M7.5 .5L.5 7.5" stroke="#444" /></CloseIcon>
          </NavHead>
          <NavBtn $pt={2}>工程设置</NavBtn>
          <NavBtn $pt={1}>绘图输入</NavBtn>
          <NavBody>
            <NavTools>
              <I w={16}><path d="M4.5 1V9M1 5H8" stroke="#123a28" strokeWidth="2.4" /><path d="M12 7V15M8 11H16" stroke="#0f7a5e" strokeWidth="2.4" /></I>
              <I w={16}><path d="M0 4H7" stroke="#123a28" strokeWidth="2.4" /><path d="M7 10H15" stroke="#0f7a5e" strokeWidth="2.4" /></I>
            </NavTools>
            <TreeFrame>
              <TreeScroll>
                {nav.map(n => (
                  <React.Fragment key={n.label}>
                    <Row>
                      <Twist $ml={6}>{n.open ? <Down /> : <Right />}</Twist>
                      <Dots w={7} /><Folder open={n.open} />
                      <Label $ml={5}>{n.label}</Label>
                    </Row>
                    {n.kids?.map(([t, k], i) => (
                      <Row key={t}>
                        <NavLines last={i === n.kids!.length - 1} />
                        <NavItem $on={t === '桩承台(V)'}><Comp k={k} /><Label $ml={4}><Mx t={t} /></Label></NavItem>
                      </Row>
                    ))}
                  </React.Fragment>
                ))}
              </TreeScroll>
              <Bar>
                <BarBtn><Up /></BarBtn>
                <BarTrack><BarThumb $top={83} $h={313} /></BarTrack>
                <BarBtn><Down /></BarBtn>
              </Bar>
            </TreeFrame>
          </NavBody>
          <NavBtn $h={21}>单构件输入</NavBtn>
          <NavBtn $h={21}>报表预览</NavBtn>
        </Nav>

        <Main>
          <Row2>
            <Tool $w={60}>{Tb.add}新建<Caret $ml={0} /></Tool>
            <Tool $w={50} $g={6}>{Tb.x}删除</Tool>
            <Tool $w={52}>{Tb.copy}复制</Tool>
            <Tool $w={62} $g={3}>{Tb.ren}重命名</Tool>
            <Sep $w={3} />
            <Tool $w={28}>楼层</Tool>
            <FloorCombo>基础层<Caret $ml={0} /></FloorCombo>
            <Sep $w={5} />
            <Tool $w={60} $g={5}>{Tb.sort}排序<Caret $ml={0} /></Tool>
            <Tool $w={59}>{Tb.funnel}过滤<Caret $ml={0} /></Tool>
            <Sep $w={6} />
            <Tool $w={135}>{Tb.from}从其他楼层复制构件</Tool>
            <Tool $w={135}>{Tb.to}复制构件到其他楼层</Tool>
            <Sep $w={8} />
            <Tool $w={40}>查找<Caret $ml={0} /></Tool>
            <Sep $w={8} />
            <Tool $w={51} $g={7} $muted>{Tb.up}上移</Tool>
            <Tool $g={7} $muted>{Tb.down}下移</Tool>
          </Row2>
          <Body>
            <CompCol>
              <SearchRow>
                <Search>搜索构件...</Search>
                <SearchIcon width="15" height="15" viewBox="0 0 15 15"><circle cx="9" cy="6" r="4.5" fill="#e8f4fd" stroke="#2a8ae0" strokeWidth="2" /><path d="M5.5 9.5L1.5 13.5" stroke="#2a8ae0" strokeWidth="2.5" /></SearchIcon>
              </SearchRow>
              <CompFrame>
                <TreeScroll>
                  {cts.map(c => (
                    <React.Fragment key={c}>
                      <Row>
                        <Twist $ml={26}><Down /></Twist>
                        <Dots w={7} /><Gear />
                        <Label $ml={8}><Lat>CT-{c}</Lat></Label>
                      </Row>
                      <Row>
                        <CompLines />
                        <CompItem $on={c === 92}><Gear /><Label $ml={9}><Mx t={`(底)CT-${c}-1`} /></Label></CompItem>
                      </Row>
                    </React.Fragment>
                  ))}
                </TreeScroll>
                <Bar>
                  <BarBtn><Up /></BarBtn>
                  <BarTrack><BarThumb $top={424} $h={101} /></BarTrack>
                  <BarBtn><Down /></BarBtn>
                </Bar>
              </CompFrame>
            </CompCol>
            <Props>
              <PropTab>属性</PropTab>
              <PropTable>
                <PropHead><RowNo /></PropHead>
                {Array.from({ length: 11 }, (_, i) => <PropRow key={i}><RowNo $on={i === 0}>{i + 1}</RowNo></PropRow>)}
              </PropTable>
            </Props>
          </Body>
        </Main>
      </Workspace>

      <Status>
        <Cell $w={147} />
        <Cell $w={77}><Mx t="层高:2.15m" /></Cell>
        <Cell $w={97}><Mx t="底标高:-2.2m" /></Cell>
        <Cell $w={47}><Lat>0</Lat></Cell>
        <Cell $w={913}>名称在当前层当前构件类型下不允许重名</Cell>
        <Cell $w={70}><Lat>434.1 FPS</Lat></Cell>
      </Status>

      <Task>
        <Start><svg width="16" height="16" viewBox="0 0 16 16"><path d="M0 2.3L6.8 1.3V7.6H0ZM7.6 1.2L16 0V7.6H7.6ZM0 8.4H6.8V14.7L0 13.7ZM7.6 8.4H16V16L7.6 14.8Z" fill="#fff" /></svg></Start>
        <Cortana>
          <Ring /><Hint>在这里输入你要搜索的内容</Hint>
          <MicWrap><Mic size={17} color="#a8a8a8" /></MicWrap>
        </Cortana>
        <Slot $w={48}><svg width="20" height="14" viewBox="0 0 20 14"><path d="M5.5 .5H14.5V13.5H5.5ZM3 2.5H1.5V11.5H3M17 2.5H18.5V11.5H17" fill="none" stroke="#fff" /></svg></Slot>
        <Slot $w={52}><svg width="22" height="22" viewBox="0 0 24 24"><path d="M11 11C8 5 4 3 3 5S3 12 11 11ZM13 11C19 8 21 4 19 3S12 3 13 11ZM13 13C16 19 20 21 21 19S21 12 13 13ZM11 13C5 16 3 20 5 21S12 21 11 13Z" fill="#eee" /></svg></Slot>
        <Slot $w={52}><FaInternetExplorer size={22} color="#e8e8e8" /></Slot>
        <Slot $w={48}><svg width="20" height="20" viewBox="0 0 20 20"><path d="M17 4C10 0 2 4 2 11C2 16 8 19 13 17C18 15 18 8 13 6.5C9 5.5 6 8 7 11C8 14 12 14 13 11" fill="none" stroke="#ccc" strokeWidth="1.5" /></svg></Slot>
        <Slot $w={60}><FaEdge size={21} color="#0a78d4" /></Slot>
        <Slot $w={36}><FaInternetExplorer size={23} color="#2a9ae8" /></Slot>
        <Slot $w={60}><svg width="22" height="20" viewBox="0 0 22 20"><path d="M0 1H8L10 3H22V19H0Z" fill="#fbe38e" /><path d="M0 5H22" stroke="#e8c860" /><path d="M7 10H15V19H12V14H10V19H7Z" fill="#4aa8e8" /><path d="M5 14H17" stroke="#4aa8e8" strokeWidth="2" /></svg></Slot>
        <Slot $w={40} $on><svg width="24" height="24" viewBox="0 0 24 24"><path d="M23 4C14 -2 2 2 2 13C2 22 14 25 20 19C24 14 20 8 14 9C11 10 10 13 12 15" fill="none" stroke="#1e88e5" strokeWidth="4" /></svg></Slot>
        <Slot $w={40} $ml={9} $on><svg width="24" height="24" viewBox="0 0 24 24"><circle cx="12" cy="12" r="11" fill="#5fc22e" stroke="#dff5cc" strokeWidth="1" /><circle cx="12" cy="12" r="8" fill="none" stroke="#fff" strokeWidth="1.5" /><path d="M5 12H19M12 6L8 10H16Z" stroke="#fff" fill="#fff" /></svg></Slot>
        <Slot $w={48} $ml={5} $on $active><AppIcon s={24} /></Slot>
        <Slot $w={40} $ml={5} $on><svg width="24" height="24" viewBox="0 0 24 24"><rect x="1" y="1" width="22" height="22" rx="2" fill="#f0a030" stroke="#c07010" /><path d="M5 5H16L19 19H8Z" fill="#fff3c0" stroke="#a06010" /><path d="M8 9H15M8 12H16M9 15H16" stroke="#a06010" /></svg></Slot>
        <TrayItem $w={32} $ml={87}>链接</TrayItem>
        <TrayItem $w={24}><ChevronUp size={18} color="#ddd" /></TrayItem>
        <TrayItem $w={26}><svg width="18" height="12" viewBox="0 0 18 12"><path d="M3.5 .5V3M6.5 .5V3M2 3H8V6H2ZM5 6V9" stroke="#eee" fill="none" /><rect x="6.5" y="2.5" width="10" height="8" fill="#111" stroke="#eee" /><rect x="8" y="4" width="7" height="5" fill="#eee" /></svg></TrayItem>
        <TrayItem $w={22}><FaWifi size={13} color="#bbb" /></TrayItem>
        <TrayItem $w={22}><Volume1 size={18} color="#ddd" /></TrayItem>
        <TrayItem $w={36}><svg width="23" height="13" viewBox="0 0 23 13"><rect x=".5" y=".5" width="22" height="12" fill="none" stroke="#eee" /><path d="M3 3.5H20M3 6.5H20" stroke="#eee" strokeDasharray="1 1" /><path d="M6 9.5H17" stroke="#eee" /></svg></TrayItem>
        <TrayItem $w={18}><TrayA>A</TrayA></TrayItem>
        <TrayItem $w={44} $pr={6}><Sogou s={18} /></TrayItem>
        <Clock><span>10:46</span><span>2018/4/18</span></Clock>
        <TrayItem $w={60} $pr={6}><MessageSquare size={19} color="#eee" strokeWidth={1.2} /></TrayItem>
      </Task>

      <Dialog>
        <DlgTitle>参数图</DlgTitle>
        <DlgBody>
          <RadioBand>
            <RadioItem $w={384}><Radio $on />角度放坡形式</RadioItem>
            <RadioItem $w={100}><Radio />底宽放坡形式</RadioItem>
          </RadioBand>
          <Cad />
          <DlgFoot><DlgBtn>配筋形式</DlgBtn></DlgFoot>
        </DlgBody>
      </Dialog>

      <ImeLogo><Sogou s={30} /></ImeLogo>
      <Ime>
        <ImeSlot>A</ImeSlot>
        <ImeSlot><svg width="14" height="12" viewBox="0 0 14 12"><circle cx="3" cy="4" r="1.6" fill="#1e76c8" /><path d="M10 3C11 5 11 7 9 10" fill="none" stroke="#1e76c8" strokeWidth="2" /></svg></ImeSlot>
        <ImeSlot><FaRegSmile size={15} /></ImeSlot>
        <ImeSlot><FaMicrophone size={15} /></ImeSlot>
        <ImeSlot><FaKeyboard size={16} /></ImeSlot>
        <ImeSlot><FaUser size={13} color="#a9c0d4" /></ImeSlot>
        <ImeSlot><FaTshirt size={15} /></ImeSlot>
        <ImeSlot><FaWrench size={14} /></ImeSlot>
      </Ime>
      <ImeMore>»</ImeMore>
    </Root>
  );
}
